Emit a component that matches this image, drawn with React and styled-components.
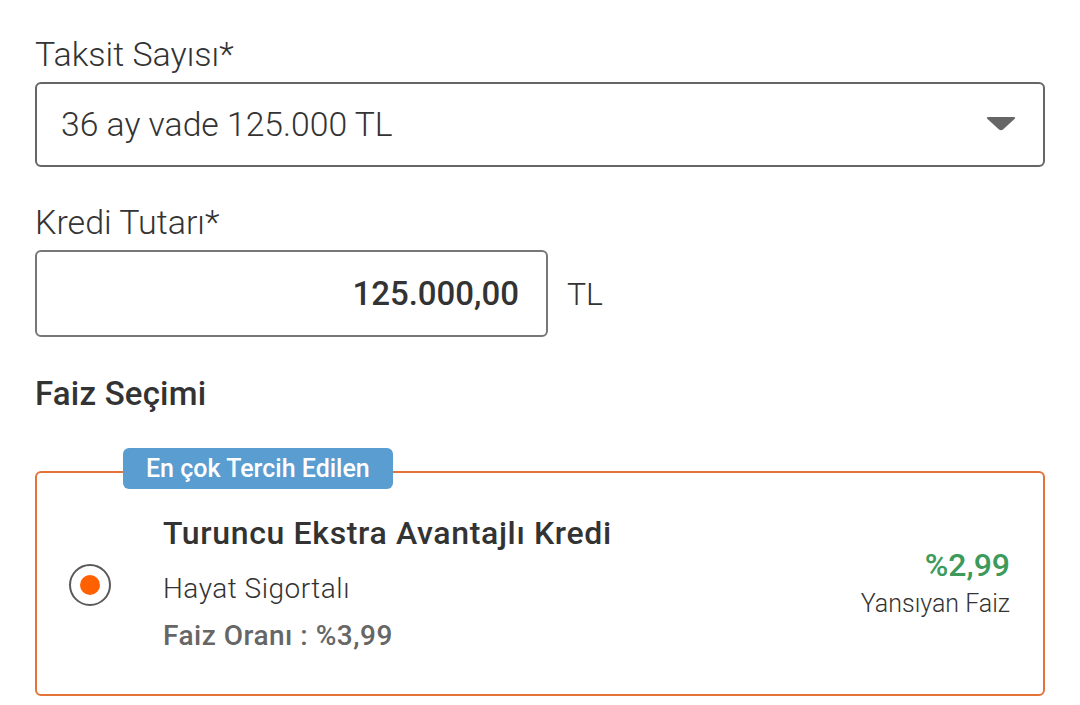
import React from 'react';
import styled, {createGlobalStyle} from 'styled-components';

const GlobalStyle = createGlobalStyle`
    body {
        margin: 0;
        background: #fff;
        font-family: Roboto, "Noto Sans", sans-serif;
        color: #333;
    }
`;

const Label = ({children, top = 0}) => (
    <FieldLabel top={top}>{children}</FieldLabel>
)

const CaretDown = () => (
    <svg width='30' height='15' viewBox='0 0 30 15'>
        <path d='M2 1 L28 1 Q30 1 28.5 3 L17 13.5 Q15 15 13 13.5 L1.5 3 Q0 1 2 1 Z' fill='#666' />
    </svg>
)

const RadioButton = ({checked = false}) => (
    <RadioOuter>
        {checked && <RadioDot />}
    </RadioOuter>
)

function App() {
    return (
        <Page>
            <GlobalStyle />
            <Label top={34}>Taksit Sayısı*</Label>
            <Select>
                <span>36 ay vade 125.000 TL</span>
                <CaretDown />
            </Select>

            <Label top={35}>Kredi Tutarı*</Label>
            <AmountRow>
                <AmountInput>125.000,00</AmountInput>
                <Currency>TL</Currency>
            </AmountRow>

            <SectionTitle>Faiz Seçimi</SectionTitle>

            <OfferCard>
                <Badge>En çok Tercih Edilen</Badge>
                <RadioButton checked />
                <OfferInfo>
                    <OfferTitle>Turuncu Ekstra Avantajlı Kredi</OfferTitle>
                    <OfferSub>Hayat Sigortalı</OfferSub>
                    <OfferRate>Faiz Oranı : %3,99</OfferRate>
                </OfferInfo>
                <OfferSide>
                    <SideRate>%2,99</SideRate>
                    <SideLabel>Yansıyan Faiz</SideLabel>
                </OfferSide>
            </OfferCard>
        </Page>
    )
}

const Page = styled.div`
    display: flex;
    flex-direction: column;
    padding: 0 35px;
    width: 1080px;
    box-sizing: border-box;
`;

const FieldLabel = styled.div`
    margin-top: ${({top}) => top}px;
    font-size: 34px;
    line-height: 40px;
    font-weight: 300;
    color: #333;
`;

const Select = styled.div`
    display: flex;
    align-items: center;
    justify-content: space-between;
    box-sizing: border-box;
    height: 85px;
    margin-top: 8px;
    padding: 0 27px 0 24px;
    border: 2px solid #666;
    border-radius: 6px;
    font-size: 33.7px;
    font-weight: 300;
    color: #333;

    svg {
        margin-top: -3px;
    }
`;

const AmountRow = styled.div`
    display: flex;
    align-items: center;
    gap: 19px;
    margin-top: 8px;
`;

const AmountInput = styled.div`
    display: flex;
    align-items: center;
    justify-content: flex-end;
    box-sizing: border-box;
    width: 513px;
    height: 87px;
    padding: 0 27px;
    border: 2px solid #777;
    border-radius: 6px;
    font-size: 33px;
    font-weight: 500;
    color: #333;
`;

const Currency = styled.div`
    font-size: 32px;
    font-weight: 300;
    color: #333;
`;

const SectionTitle = styled.div`
    margin-top: 37px;
    font-size: 33px;
    line-height: 40px;
    font-weight: 500;
    letter-spacing: 0.2px;
    color: #333;
`;

const OfferCard = styled.div`
    position: relative;
    display: flex;
    align-items: center;
    box-sizing: border-box;
    margin-top: 57px;
    padding: 42px 33px 40px 32px;
    border: 2px solid #e4733a;
    border-radius: 6px;
`;

const Badge = styled.div`
    position: absolute;
    top: -25px;
    left: 86px;
    padding: 0 23px;
    height: 41px;
    line-height: 41px;
    border-radius: 6px;
    background-color: #5a9dd1;
    color: #fff;
    font-size: 25px;
    font-weight: 500;
`;

const RadioOuter = styled.div`
    display: flex;
    align-items: center;
    justify-content: center;
    flex-shrink: 0;
    box-sizing: border-box;
    width: 42px;
    height: 42px;
    border: 2px solid #5a5a5a;
    border-radius: 50%;
    background: #fff;
`;

const RadioDot = styled.div`
    width: 20px;
    height: 20px;
    border-radius: 50%;
    background-color: #ff6000;
`;

const OfferInfo = styled.div`
    display: flex;
    flex-direction: column;
    flex: 1;
    margin-left: 52px;
`;

const OfferTitle = styled.div`
    font-size: 32px;
    line-height: 36px;
    font-weight: 500;
    letter-spacing: 0.65px;
    color: #333;
`;

const OfferSub = styled.div`
    margin-top: 20px;
    font-size: 28px;
    line-height: 36px;
    font-weight: 300;
    letter-spacing: 0.5px;
    color: #333;
`;

const OfferRate = styled.div`
    margin-top: 11px;
    font-size: 28px;
    line-height: 36px;
    font-weight: 500;
    letter-spacing: 0.5px;
    color: #666;
`;

const OfferSide = styled.div`
    display: flex;
    flex-direction: column;
    align-items: flex-end;
    gap: 4px;
    margin-top: -4px;
`;

const SideRate = styled.div`
    font-size: 32px;
    line-height: 38px;
    font-weight: 500;
    color: #3c9a5b;
`;

const SideLabel = styled.div`
    font-size: 25px;
    line-height: 32px;
    font-weight: 300;
    color: #333;
`;

export default App;
